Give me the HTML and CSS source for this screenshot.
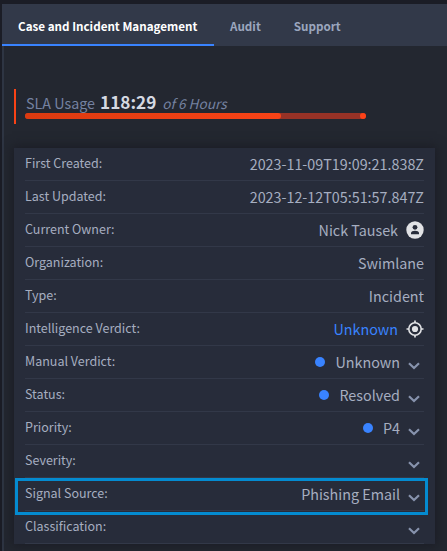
FILE: index.html
```html
<!DOCTYPE html>
<html lang="en">
<head>
<meta charset="utf-8">
<title>Case and Incident Management</title>
<link rel="stylesheet" href="styles.css">
</head>
<body>
<svg class="defs" aria-hidden="true">
  <symbol id="chevron" viewBox="0 0 12 8"><path d="M1 1.3 6 6.1 11 1.3" fill="none" stroke="currentColor" stroke-width="2.2"/></symbol>
</svg>
<main class="app">
  <nav class="tabs">
    <a class="tab active">Case and Incident Management</a>
    <a class="tab audit">Audit</a>
    <a class="tab support">Support</a>
  </nav>
  <section class="content">
    <div class="sla">
      <div class="sla-text"><span class="sla-label">SLA Usage</span><b class="sla-value">118:29</b><i class="sla-total">of 6 Hours</i></div>
      <div class="track"><div class="fill"></div><div class="end"></div></div>
    </div>
    <div class="panel">
      <div class="row"><span class="label">First Created:</span><span class="value date">2023-11-09T19:09:21.838Z</span></div>
      <div class="row"><span class="label">Last Updated:</span><span class="value date">2023-12-12T05:51:57.847Z</span></div>
      <div class="row"><span class="label">Current Owner:</span><span class="value">Nick Tausek</span>
        <svg class="icon" viewBox="0 0 18 18"><circle cx="9" cy="9" r="8.7" fill="#e1e2e5"/><circle cx="9" cy="6.3" r="2.4" fill="#272c3a"/><path d="M5 13.2v-1.1c0-3.2 8-3.2 8 0v1.1z" fill="#272c3a"/></svg></div>
      <div class="row"><span class="label">Organization:</span><span class="value">Swimlane</span></div>
      <div class="row"><span class="label">Type:</span><span class="value">Incident</span></div>
      <div class="row"><span class="label">Intelligence Verdict:</span><span class="value link">Unknown</span>
        <svg class="icon" viewBox="0 0 18 18"><circle cx="9" cy="9" r="6.2" fill="none" stroke="#e1e2e5" stroke-width="1.6"/><circle cx="9" cy="9" r="3.1" fill="#e1e2e5"/><path d="M9 .5v2.5M9 15v2.5M.5 9H3M15 9h2.5" stroke="#e1e2e5" stroke-width="1.7"/></svg></div>
      <div class="row"><span class="label">Manual Verdict:</span><span class="dot"></span><span class="value">Unknown</span><svg class="chevron"><use href="#chevron"/></svg></div>
      <div class="row"><span class="label">Status:</span><span class="dot"></span><span class="value">Resolved</span><svg class="chevron"><use href="#chevron"/></svg></div>
      <div class="row"><span class="label">Priority:</span><span class="dot"></span><span class="value">P4</span><svg class="chevron"><use href="#chevron"/></svg></div>
      <div class="row"><span class="label">Severity:</span><svg class="chevron"><use href="#chevron"/></svg></div>
      <div class="row selected"><span class="label">Signal Source:</span><span class="value">Phishing Email</span><svg class="chevron"><use href="#chevron"/></svg></div>
      <div class="row"><span class="label">Classification:</span><svg class="chevron"><use href="#chevron"/></svg></div>
    </div>
  </section>
</main>
</body>
</html>
```
FILE: styles.css
```css
* { box-sizing: border-box; }
body {
  margin: 0;
  height: 551px;
  overflow: hidden;
  background: #1b1d26;
  padding: 4px 0 0 2px;
  font-family: "Noto Sans CJK SC", "Open Sans", sans-serif;
  color: #a6aec0;
}
.defs { display: none; }
.app { height: 547px; background: #232730; }
.tabs { display: flex; height: 42px; background: #323949; }
.tab {
  height: 42px;
  line-height: 44px;
  font-size: 11.65px;
  font-weight: 700;
  color: #9ba6be;
  padding: 0 16px;
  white-space: nowrap;
}
.tab.active { width: 212px; color: #fff; border-bottom: 2px solid #3983ff; }
.tab.support { padding-left: 17px; }
.content { height: 505px; border-left: 2px solid #2e3543; padding: 43px 12px 0 10px; }
.sla { height: 35px; border-left: 2px solid #f94316; padding: 2px 0 0 9px; }
.sla-text {
  display: flex;
  align-items: baseline;
  height: 22px;
  line-height: 22px;
  padding-left: 1px;
  font-size: 14.3px;
  color: #7582a1;
  white-space: nowrap;
}
.sla-value { margin: 0 6px 0 5px; font-size: 17.2px; color: #d5d9e2; }
.sla-total { font-size: 13.6px; }
.track { display: flex; align-items: center; width: 341px; height: 6px; border-radius: 3px; background: #973226; }
.fill { width: 256px; height: 6px; border-radius: 3px; background: linear-gradient(90deg, #db3a10, #f94316); }
.end { width: 6px; height: 6px; margin-left: auto; border-radius: 50%; background: #fb4218; }
.panel {
  width: 421px;
  height: 396px;
  margin-top: 24px;
  padding: 0 11px;
  background: #272c3a;
  box-shadow: 0 0 10px 2px #1b1d25;
}
.row {
  position: relative;
  display: flex;
  height: 33px;
  padding-bottom: 1px;
  border-bottom: 1px solid #323848;
  white-space: nowrap;
}
.label { margin-right: auto; font-size: 12.5px; line-height: 29px; }
.value { font-size: 14.33px; line-height: 32px; }
.link { color: #3983ff; }
.icon { width: 18px; height: 18px; margin: 7px 0 0 8px; }
.dot { width: 10px; height: 10px; margin: 11px 10px 0 0; border-radius: 50%; background: #3983ff; }
.chevron { width: 12px; height: 8px; margin: 16px 4px 0 8px; color: #8793ad; }
.selected::after {
  content: "";
  position: absolute;
  inset: 0 -4px -5px -10px;
  border: 3px solid #048bd0;
}
```
